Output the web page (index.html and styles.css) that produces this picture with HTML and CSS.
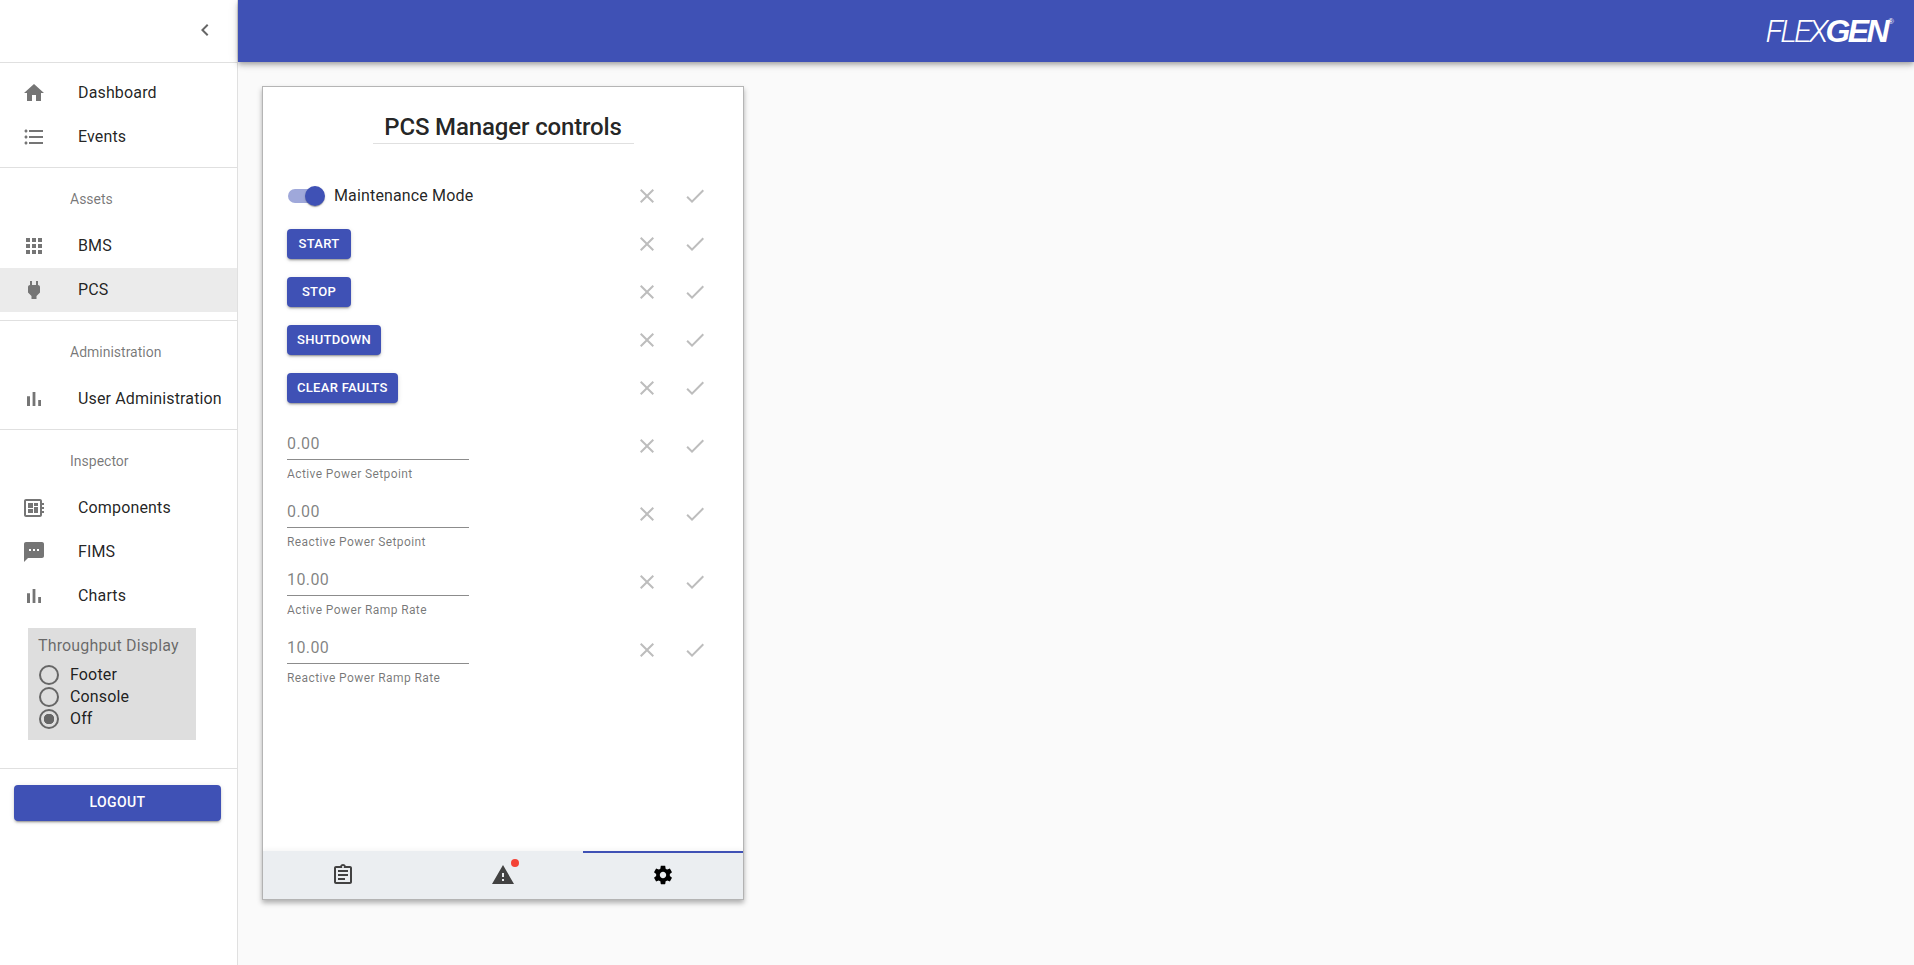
FILE: index.html

```html
<!DOCTYPE html>
<html lang="en">
<head>
  <meta charset="UTF-8" />
  <title>PCS Manager controls</title>
  <link rel="stylesheet" href="styles.css">
</head>
<body>
  <svg class="sprite" xmlns="http://www.w3.org/2000/svg">
    <symbol id="i-chevron" viewBox="0 0 24 24"><path d="M15.41 7.41L14 6l-6 6 6 6 1.41-1.41L10.83 12z"/></symbol>
    <symbol id="i-home" viewBox="0 0 24 24"><path d="M10 20v-6h4v6h5v-8h3L12 3 2 12h3v8z"/></symbol>
    <symbol id="i-list" viewBox="0 0 24 24"><path d="M4 10.5c-.83 0-1.5.67-1.5 1.5s.67 1.5 1.5 1.5 1.5-.67 1.5-1.5-.67-1.5-1.5-1.5zm0-6c-.83 0-1.5.67-1.5 1.5S3.17 7.5 4 7.5 5.5 6.83 5.5 6 4.83 4.5 4 4.5zm0 12c-.83 0-1.5.68-1.5 1.5s.68 1.5 1.5 1.5 1.5-.68 1.5-1.5-.67-1.5-1.5-1.5zM7 19h14v-2H7v2zm0-6h14v-2H7v2zm0-8v2h14V5H7z"/></symbol>
    <symbol id="i-apps" viewBox="0 0 24 24"><path d="M4 8h4V4H4v4zm6 12h4v-4h-4v4zm-6 0h4v-4H4v4zm0-6h4v-4H4v4zm6 0h4v-4h-4v4zm6-10v4h4V4h-4zm-6 4h4V4h-4v4zm6 6h4v-4h-4v4zm0 6h4v-4h-4v4z"/></symbol>
    <symbol id="i-power" viewBox="0 0 24 24"><path d="M16.01 7L16 3h-2v4h-4V3H8v4h-.01C7 6.99 6 7.99 6 8.99v5.49L9.5 18v3h5v-3l3.5-3.51v-5.5c0-1-1-2-1.99-1.99z"/></symbol>
    <symbol id="i-bars" viewBox="0 0 24 24"><path d="M5 9.2h3V19H5zM10.6 5h2.8v14h-2.8zm5.6 8H19v6h-2.8z"/></symbol>
    <symbol id="i-board" viewBox="0 0 24 24"><path d="M22 9V7h-2V5c0-1.1-.9-2-2-2H4c-1.1 0-2 .9-2 2v14c0 1.1.9 2 2 2h14c1.1 0 2-.9 2-2v-2h2v-2h-2v-2h2v-2h-2V9h2zm-4 10H4V5h14v14zM6 13h5v4H6zm6-6h4v3h-4zM6 7h5v5H6zm6 4h4v6h-4z"/></symbol>
    <symbol id="i-sms" viewBox="0 0 24 24"><path d="M20 2H4c-1.1 0-1.99.9-1.99 2L2 22l4-4h14c1.1 0 2-.9 2-2V4c0-1.1-.9-2-2-2zM9 11H7V9h2v2zm4 0h-2V9h2v2zm4 0h-2V9h2v2z"/></symbol>
    <symbol id="i-clear" viewBox="0 0 24 24"><path d="M19 6.41L17.59 5 12 10.59 6.41 5 5 6.41 10.59 12 5 17.59 6.41 19 12 13.41 17.59 19 19 17.59 13.41 12z"/></symbol>
    <symbol id="i-check" viewBox="0 0 24 24"><path d="M9 16.17L4.83 12l-1.42 1.41L9 19 21 7l-1.41-1.41z"/></symbol>
    <symbol id="i-clipboard" viewBox="0 0 24 24"><path d="M19 3h-4.18C14.4 1.84 13.3 1 12 1c-1.3 0-2.4.84-2.82 2H5c-1.1 0-2 .9-2 2v14c0 1.1.9 2 2 2h14c1.1 0 2-.9 2-2V5c0-1.1-.9-2-2-2zm-7 0c.55 0 1 .45 1 1s-.45 1-1 1-1-.45-1-1 .45-1 1-1zm7 16H5V5h14v14zM7 7h10v2H7zM7 11h10v2H7zM7 15h7v2H7z"/></symbol>
    <symbol id="i-warning" viewBox="0 0 24 24"><path d="M1 21h22L12 2 1 21zm12-3h-2v-2h2v2zm0-4h-2v-4h2v4z"/></symbol>
    <symbol id="i-gear" viewBox="0 0 24 24"><path d="M19.43 12.98c.04-.32.07-.64.07-.98s-.03-.66-.07-.98l2.11-1.65c.19-.15.24-.42.12-.64l-2-3.46c-.12-.22-.39-.3-.61-.22l-2.49 1c-.52-.4-1.08-.73-1.69-.98l-.38-2.65C14.46 2.18 14.25 2 14 2h-4c-.25 0-.46.18-.49.42l-.38 2.65c-.61.25-1.17.59-1.69.98l-2.49-1c-.23-.09-.49 0-.61.22l-2 3.46c-.13.22-.07.49.12.64l2.11 1.65c-.04.32-.07.65-.07.98s.03.66.07.98l-2.11 1.65c-.19.15-.24.42-.12.64l2 3.46c.12.22.39.3.61.22l2.49-1c.52.4 1.08.73 1.69.98l.38 2.65c.03.24.24.42.49.42h4c.25 0 .46-.18.49-.42l.38-2.65c.61-.25 1.17-.59 1.69-.98l2.49 1c.23.09.49 0 .61-.22l2-3.46c.12-.22.07-.49-.12-.64l-2.11-1.65zM12 15.5c-1.93 0-3.5-1.57-3.5-3.5s1.57-3.5 3.5-3.5 3.5 1.57 3.5 3.5-1.57 3.5-3.5 3.5z"/></symbol>
  </svg>

  <div class="app">
    <aside class="sidebar">
      <div class="sidebar-top">
        <svg class="icon collapse"><use href="#i-chevron"/></svg>
      </div>

      <nav class="nav-section">
        <a class="nav-item"><svg class="icon"><use href="#i-home"/></svg>Dashboard</a>
        <a class="nav-item"><svg class="icon"><use href="#i-list"/></svg>Events</a>
      </nav>

      <nav class="nav-section">
        <div class="nav-heading">Assets</div>
        <a class="nav-item"><svg class="icon"><use href="#i-apps"/></svg>BMS</a>
        <a class="nav-item selected"><svg class="icon"><use href="#i-power"/></svg>PCS</a>
      </nav>

      <nav class="nav-section">
        <div class="nav-heading">Administration</div>
        <a class="nav-item"><svg class="icon"><use href="#i-bars"/></svg>User Administration</a>
      </nav>

      <nav class="nav-section">
        <div class="nav-heading">Inspector</div>
        <a class="nav-item"><svg class="icon"><use href="#i-board"/></svg>Components</a>
        <a class="nav-item"><svg class="icon"><use href="#i-sms"/></svg>FIMS</a>
        <a class="nav-item"><svg class="icon"><use href="#i-bars"/></svg>Charts</a>

        <div class="throughput">
          <div class="throughput-title">Throughput Display</div>
          <div class="radio-row"><span class="radio"></span>Footer</div>
          <div class="radio-row"><span class="radio"></span>Console</div>
          <div class="radio-row"><span class="radio checked"></span>Off</div>
        </div>
      </nav>

      <div class="logout-wrap">
        <button class="btn logout" type="button">Logout</button>
      </div>
    </aside>

    <div class="main">
      <header class="topbar">
        <div class="logo"><span class="logo-flex">FLEX</span><span class="logo-gen">GEN</span><span class="logo-reg">®</span></div>
      </header>

      <section class="content">
        <div class="card">
          <div class="card-body">
            <h2 class="card-title">PCS Manager controls</h2>

            <div class="row">
              <div class="row-main">
                <span class="switch"><span class="switch-thumb"></span></span>
                <span class="switch-label">Maintenance Mode</span>
              </div>
              <div class="row-actions">
                <svg class="icon"><use href="#i-clear"/></svg>
                <svg class="icon"><use href="#i-check"/></svg>
              </div>
            </div>

            <div class="row">
              <div class="row-main"><button class="btn" type="button">Start</button></div>
              <div class="row-actions">
                <svg class="icon"><use href="#i-clear"/></svg>
                <svg class="icon"><use href="#i-check"/></svg>
              </div>
            </div>
            <div class="row">
              <div class="row-main"><button class="btn" type="button">Stop</button></div>
              <div class="row-actions">
                <svg class="icon"><use href="#i-clear"/></svg>
                <svg class="icon"><use href="#i-check"/></svg>
              </div>
            </div>
            <div class="row">
              <div class="row-main"><button class="btn" type="button">Shutdown</button></div>
              <div class="row-actions">
                <svg class="icon"><use href="#i-clear"/></svg>
                <svg class="icon"><use href="#i-check"/></svg>
              </div>
            </div>
            <div class="row">
              <div class="row-main"><button class="btn" type="button">Clear Faults</button></div>
              <div class="row-actions">
                <svg class="icon"><use href="#i-clear"/></svg>
                <svg class="icon"><use href="#i-check"/></svg>
              </div>
            </div>

            <div class="fields">
              <div class="field-row">
                <div class="field">
                  <div class="field-value">0.00</div>
                  <div class="field-label">Active Power Setpoint</div>
                </div>
                <div class="row-actions">
                  <svg class="icon"><use href="#i-clear"/></svg>
                  <svg class="icon"><use href="#i-check"/></svg>
                </div>
              </div>
              <div class="field-row">
                <div class="field">
                  <div class="field-value">0.00</div>
                  <div class="field-label">Reactive Power Setpoint</div>
                </div>
                <div class="row-actions">
                  <svg class="icon"><use href="#i-clear"/></svg>
                  <svg class="icon"><use href="#i-check"/></svg>
                </div>
              </div>
              <div class="field-row">
                <div class="field">
                  <div class="field-value">10.00</div>
                  <div class="field-label">Active Power Ramp Rate</div>
                </div>
                <div class="row-actions">
                  <svg class="icon"><use href="#i-clear"/></svg>
                  <svg class="icon"><use href="#i-check"/></svg>
                </div>
              </div>
              <div class="field-row">
                <div class="field">
                  <div class="field-value">10.00</div>
                  <div class="field-label">Reactive Power Ramp Rate</div>
                </div>
                <div class="row-actions">
                  <svg class="icon"><use href="#i-clear"/></svg>
                  <svg class="icon"><use href="#i-check"/></svg>
                </div>
              </div>
            </div>
          </div>

          <div class="card-tabs">
            <div class="tab"><svg class="icon tab-info"><use href="#i-clipboard"/></svg></div>
            <div class="tab">
              <span class="tab-alert">
                <svg class="icon tab-warn"><use href="#i-warning"/></svg>
                <span class="badge"></span>
              </span>
            </div>
            <div class="tab active"><svg class="icon tab-gear"><use href="#i-gear"/></svg></div>
          </div>
        </div>
      </section>
    </div>
  </div>
</body>
</html>
```

FILE: styles.css

```css
* {
  box-sizing: border-box;
}
html, body {
  height: 100%;
}
body {
  margin: 0;
  overflow: hidden;
  background: #fafafa;
  color: rgba(0,0,0,0.87);
  font-family: Roboto, "Liberation Sans", sans-serif;
  font-size: 16px;
}
.sprite {
  display: none;
}
.icon {
  width: 24px;
  height: 24px;
  flex: none;
  fill: #757575;
}

.app {
  display: flex;
  height: 100%;
}

/* sidebar */
.sidebar {
  width: 238px;
  flex: none;
  background: #fff;
  border-right: 1px solid #e0e0e0;
}
.sidebar-top {
  height: 63px;
  display: flex;
  align-items: center;
  justify-content: flex-end;
  padding: 0 20px 2px 0;
  border-bottom: 1px solid #e0e0e0;
}
.collapse {
  fill: #666;
}
.nav-section {
  padding: 8px 0;
  border-bottom: 1px solid #e0e0e0;
}
.nav-item {
  display: flex;
  align-items: center;
  height: 44px;
  padding: 0 0 2px 22px;
  letter-spacing: 0.15px;
}
.nav-item .icon {
  margin: 2px 32px 0 0;
}
.nav-item.selected {
  background: #ebebeb;
}
.nav-heading {
  height: 48px;
  line-height: 46px;
  padding-left: 70px;
  font-size: 14px;
  color: rgba(0,0,0,0.54);
}
.throughput {
  width: 168px;
  height: 112px;
  margin: 10px 0 20px 28px;
  padding: 7px 10px;
  background: #dedede;
}
.throughput-title {
  line-height: 22px;
  margin-bottom: 7px;
  color: rgba(0,0,0,0.54);
  letter-spacing: 0.15px;
}
.radio-row {
  display: flex;
  align-items: center;
  height: 22px;
  padding-bottom: 2px;
  letter-spacing: 0.15px;
}
.radio {
  width: 20px;
  height: 20px;
  margin: 2px 11px 0 1px;
  border: 2px solid #666;
  border-radius: 50%;
}
.radio.checked {
  background: radial-gradient(circle, #666 0 5px, transparent 5.5px);
}
.logout-wrap {
  padding: 16px 16px 0 14px;
}

/* buttons */
.btn {
  min-width: 64px;
  height: 30px;
  padding: 0 10px 2px;
  border: none;
  border-radius: 4px;
  background: #3f51b5;
  color: #fff;
  font-family: inherit;
  font-size: 13px;
  font-weight: 500;
  letter-spacing: 0.3px;
  text-transform: uppercase;
  box-shadow: 0 3px 1px -2px rgba(0,0,0,0.2), 0 2px 2px 0 rgba(0,0,0,0.14), 0 1px 5px 0 rgba(0,0,0,0.12);
}
.logout {
  display: block;
  width: 207px;
  height: 36px;
  font-size: 14px;
  letter-spacing: 0.4px;
}

/* top bar */
.main {
  flex: 1;
  min-width: 0;
}
.topbar {
  height: 62px;
  display: flex;
  align-items: center;
  justify-content: flex-end;
  padding-right: 20px;
  background: #3f51b5;
  color: #fff;
  box-shadow: 0 2px 4px -1px rgba(0,0,0,0.2), 0 4px 5px 0 rgba(0,0,0,0.14), 0 1px 10px 0 rgba(0,0,0,0.12);
}
.logo {
  display: flex;
  align-items: flex-start;
  font-family: "Liberation Sans", sans-serif;
  font-size: 32px;
  font-style: italic;
  line-height: 32px;
  letter-spacing: -2.6px;
}
.logo-flex {
  font-family: Roboto, sans-serif;
  font-weight: 300;
}
.logo-gen {
  font-weight: 700;
  padding-right: 1px;
}
.logo-reg {
  font-size: 8px;
  line-height: 14px;
  letter-spacing: 0;
  font-style: normal;
}

/* card */
.content {
  padding: 24px;
}
.card {
  display: flex;
  flex-direction: column;
  width: 482px;
  height: 814px;
  background: #fff;
  border: 1px solid #b5b5b5;
  box-shadow: 0 3px 5px rgba(0,0,0,0.3);
}
.card-body {
  flex: 1;
  padding: 0 24px;
}
.card-title {
  width: 261px;
  height: 57px;
  margin: 0 auto 28px;
  padding-top: 26px;
  border-bottom: 1px solid #e0e0e0;
  text-align: center;
  font-size: 24px;
  font-weight: 500;
  letter-spacing: -0.14px;
  line-height: 28px;
}
.row {
  display: flex;
  align-items: center;
  justify-content: space-between;
  height: 48px;
}
.row-main {
  display: flex;
  align-items: center;
}
.row-actions {
  display: flex;
  gap: 24px;
  padding-right: 12px;
}
.row-actions .icon {
  fill: #bdbdbd;
}
.switch {
  position: relative;
  width: 30px;
  height: 14px;
  margin-left: 1px;
  border-radius: 7px;
  background: #9fa8da;
}
.switch-thumb {
  position: absolute;
  top: -3px;
  right: -7px;
  width: 20px;
  height: 20px;
  border-radius: 50%;
  background: #3f51b5;
  box-shadow: 0 2px 1px -1px rgba(0,0,0,0.2), 0 1px 1px 0 rgba(0,0,0,0.14), 0 1px 3px 0 rgba(0,0,0,0.12);
}
.switch-label {
  margin: 0 0 2px 16px;
  letter-spacing: 0.15px;
}
.fields {
  padding-top: 16px;
}
.field-row {
  display: flex;
  justify-content: space-between;
  height: 68px;
}
.field {
  width: 182px;
}
.field-value {
  height: 32px;
  line-height: 32px;
  border-bottom: 1px solid #8c8c8c;
  color: rgba(0,0,0,0.5);
  letter-spacing: 0.4px;
}
.field-label {
  margin-top: 6px;
  font-size: 12px;
  line-height: 16px;
  color: rgba(0,0,0,0.54);
  letter-spacing: 0.4px;
}
.field-row .row-actions {
  padding-top: 6px;
}

/* bottom tabs */
.card-tabs {
  display: flex;
  height: 48px;
  background: #ebeef1;
  box-shadow: 0 -2px 4px rgba(0,0,0,0.04);
}
.tab {
  flex: 1;
  display: flex;
  align-items: center;
  justify-content: center;
  padding-bottom: 2px;
  border-top: 2px solid transparent;
}
.tab.active {
  border-top-color: #3f51b5;
}
.tab-info, .tab-warn {
  fill: #424242;
}
.tab-gear {
  width: 22px;
  height: 22px;
  fill: #000;
}
.tab-alert {
  position: relative;
  display: flex;
}
.badge {
  position: absolute;
  top: -4px;
  right: -4px;
  width: 8px;
  height: 8px;
  border-radius: 50%;
  background: #f44336;
}
```
